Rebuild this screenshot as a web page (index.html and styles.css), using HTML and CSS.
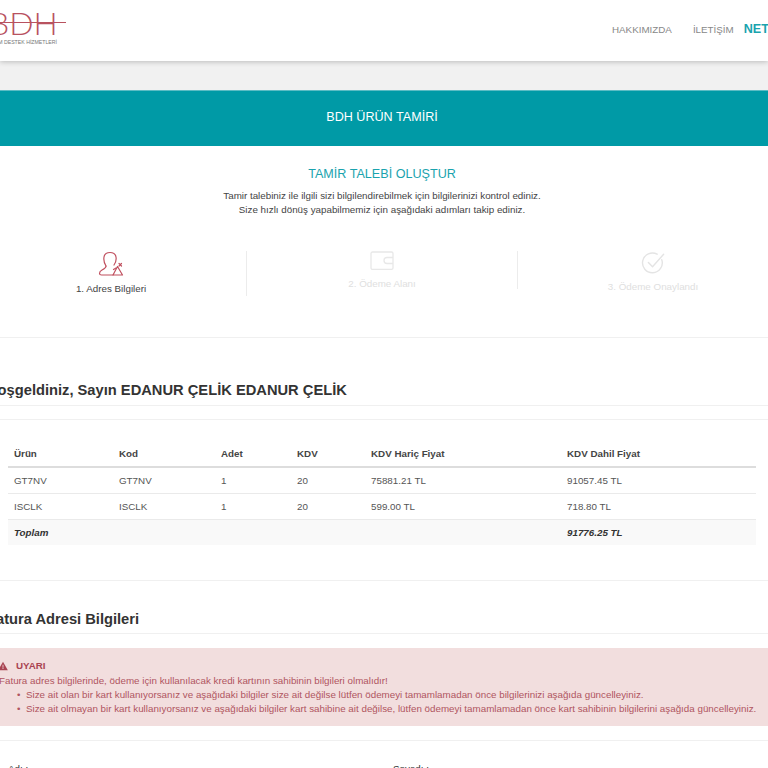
FILE: index.html
```html
<!DOCTYPE html>
<html lang="tr">
<head>
<meta charset="utf-8">
<title>BDH Ürün Tamiri</title>
<link rel="stylesheet" href="styles.css">
</head>
<body>
<div class="page">
  <header class="topbar">
    <div class="logo">
      <div class="logo-mark">BDH</div>
      <div class="logo-line"></div>
      <div class="logo-sub">BİLİŞİM DESTEK HİZMETLERİ</div>
    </div>
    <nav class="nav">
      <a class="nav-link">HAKKIMIZDA</a>
      <a class="nav-link">İLETİŞİM</a>
      <a class="nav-brand">NETWORK</a>
    </nav>
  </header>

  <div class="banner">BDH ÜRÜN TAMİRİ</div>

  <section class="intro">
    <h2 class="intro-title">TAMİR TALEBİ OLUŞTUR</h2>
    <p class="intro-text">Tamir talebiniz ile ilgili sizi bilgilendirebilmek için bilgilerinizi kontrol ediniz.<br>Size hızlı dönüş yapabilmemiz için aşağıdaki adımları takip ediniz.</p>
  </section>

  <section class="steps">
    <div class="step active">
      <svg class="step-icon" viewBox="0 0 26 26" fill="none" stroke="#c0505f" stroke-width="1.200" stroke-linejoin="round" stroke-linecap="round">
        <path d="M8 15C6 12 5.500 9 6 6 6.500 3 9 1.500 12 1.500S17.500 3 18 6C18.500 9 17.500 12 16 14"/>
        <path d="M8 15C8 17 6 18 4 19 2 20 1.500 21.500 1.500 22.500 1.500 23.500 2.500 24 3.500 24H15"/>
        <path d="M19.500 15.500L24.500 24H15z"/>
        <path d="M15.500 18.500L18 17M21 12.500L23.500 15M21 15L23.500 12.500"/>
      </svg>
      <div class="step-label">1. Adres Bilgileri</div>
    </div>
    <div class="step muted second">
      <svg class="step-icon" viewBox="1 4 24 20" fill="none" stroke="#e8e8e8" stroke-width="1.300" stroke-linejoin="round">
        <path d="M2 6.500c0-1 .7-1.500 1.500-1.500h19c.8 0 1.500.5 1.500 1.500V21c0 .8-.7 1.300-1.500 1.300h-19C2.700 22.300 2 21.800 2 21z"/>
        <path d="M24 10.500h-6a3 3 0 0 0 0 6h6"/>
      </svg>
      <div class="step-label">2. Ödeme Alanı</div>
    </div>
    <div class="step muted third">
      <svg class="step-icon" viewBox="0 0 26 26" fill="none" stroke="#e4e4e4" stroke-width="1.500" stroke-linecap="round" stroke-linejoin="round">
        <path d="M22.500 9.500A10.700 10.700 0 1 1 17.500 3.500"/>
        <path d="M8 12.500l4.500 4.500L24.500 3.500"/>
      </svg>
      <div class="step-label">3. Ödeme Onaylandı</div>
    </div>
  </section>

  <hr class="rule rule-steps">

  <h3 class="section-title welcome">Hoşgeldiniz, Sayın EDANUR ÇELİK EDANUR ÇELİK</h3>
  <hr class="rule">
  <hr class="rule rule-table">

  <table class="cart">
    <thead>
      <tr><th class="c1">Ürün</th><th class="c2">Kod</th><th class="c3">Adet</th><th class="c4">KDV</th><th class="c5">KDV Hariç Fiyat</th><th>KDV Dahil Fiyat</th></tr>
    </thead>
    <tbody>
      <tr><td>GT7NV</td><td>GT7NV</td><td>1</td><td>20</td><td>75881.21 TL</td><td>91057.45 TL</td></tr>
      <tr><td>ISCLK</td><td>ISCLK</td><td>1</td><td>20</td><td>599.00 TL</td><td>718.80 TL</td></tr>
      <tr class="total"><td>Toplam</td><td></td><td></td><td></td><td></td><td>91776.25 TL</td></tr>
    </tbody>
  </table>

  <hr class="rule rule-after-table">

  <h3 class="section-title billing">Fatura Adresi Bilgileri</h3>
  <hr class="rule">

  <div class="alert">
    <div class="alert-head">
      <svg class="alert-icon" viewBox="0 0 12 11"><path d="M6 .5L11.800 10.500H.2z" fill="#a94452"/><path d="M5.500 4h1v3.500h-1zM5.500 8h1v1h-1z" fill="#f2dede"/></svg>
      <span>UYARI</span>
    </div>
    <div class="alert-text">Fatura adres bilgilerinde, ödeme için kullanılacak kredi kartının sahibinin bilgileri olmalıdır!</div>
    <ul class="alert-list">
      <li>Size ait olan bir kart kullanıyorsanız ve aşağıdaki bilgiler size ait değilse lütfen ödemeyi tamamlamadan önce bilgilerinizi aşağıda güncelleyiniz.</li>
      <li>Size ait olmayan bir kart kullanıyorsanız ve aşağıdaki bilgiler kart sahibine ait değilse, lütfen ödemeyi tamamlamadan önce kart sahibinin bilgilerini aşağıda güncelleyiniz.</li>
    </ul>
  </div>

  <hr class="rule rule-form">

  <div class="form-row">
    <label class="field-label">Adı :</label>
    <label class="field-label">Soyadı :</label>
  </div>
</div>
</body>
</html>
```

FILE: styles.css
```css
html, body {
  margin: 0;
  padding: 0;
  background: #fff;
  overflow: hidden;
}
body {
  font-family: "Liberation Sans", Arial, sans-serif;
  color: #333;
}
.page {
  width: 768px;
  height: 768px;
  overflow: hidden;
  background: linear-gradient(#f1f1f1, #f1f1f1) 0 61px / 100% 30px no-repeat #fff;
}

/* Header */
.topbar {
  height: 61px;
  background: #fff;
  box-shadow: 0 1px 5px rgba(0, 0, 0, .22);
  display: flex;
  justify-content: space-between;
  margin-bottom: 29px;
}
.logo {
  position: relative;
  width: 70px;
  height: 61px;
  overflow: hidden;
}
.logo-mark {
  position: absolute;
  left: -11px;
  top: 4px;
  font-family: "Lato", "Liberation Sans", sans-serif;
  font-weight: 300;
  font-size: 32px;
  line-height: 38px;
  color: #b8525f;
  white-space: nowrap;
}
.logo-line {
  position: absolute;
  left: 0;
  top: 22px;
  width: 66px;
  height: 1px;
  background: #b8525f;
}
.logo-sub {
  position: absolute;
  right: 13px;
  top: 38px;
  font-size: 5.200px;
  line-height: 8px;
  color: #777;
  white-space: nowrap;
}
.nav {
  display: flex;
  align-items: center;
  white-space: nowrap;
  flex: none;
  width: 156px;
  padding-bottom: 3px;
  box-sizing: border-box;
  overflow: hidden;
}
.nav-link {
  font-size: 9.800px;
  color: #888;
  margin-right: 21px;
}
.nav-link + .nav-link {
  margin-right: 10px;
}
.nav-brand {
  font-size: 12.600px;
  font-weight: bold;
  color: #1aa3ae;
}

/* Banner */
.banner {
  height: 56px;
  margin-left: -24px;
  width: 812px;
  background: #009aa6;
  border-top: 1px solid #5cbcc4;
  box-sizing: border-box;
  color: #fff;
  font-size: 12.600px;
  line-height: 53px;
  text-align: center;
}

/* Intro */
.intro {
  margin: 0 0 0 -24px;
  width: 812px;
  text-align: center;
}
.intro-title {
  margin: 20px 0 0;
  font-size: 12.600px;
  line-height: 16px;
  font-weight: normal;
  color: #1aa3ae;
}
.intro-text {
  margin: 7px 0 0;
  font-size: 9.800px;
  line-height: 14px;
  color: #444;
}

/* Steps */
.steps {
  display: grid;
  grid-template-columns: 271px 271px 270px;
  align-items: start;
  margin: 34px 0 0 -24px;
  width: 812px;
  height: 45px;
}
.step {
  display: flex;
  flex-direction: column;
  align-items: center;
  border-right: 1px solid #ececec;
  height: 45px;
}
.step:last-child {
  border-right: 0;
}
.step-icon {
  width: 26px;
  height: 26px;
  flex: none;
}
.step-label {
  margin-top: 5px;
  font-size: 9.800px;
  line-height: 14px;
  color: #444;
}
.step.muted .step-label {
  color: #e0e0e0;
}
.step.second {
  height: 38px;
}
.second .step-icon {
  width: 24px;
  height: 20px;
}
.second .step-label {
  margin-top: 6px;
}
.third .step-icon {
  width: 24px;
  height: 24px;
}

/* Rules */
.rule {
  border: 0;
  border-top: 1px solid #f0f0f0;
  margin: 0;
}
.rule-steps {
  margin-top: 41px;
}
.rule-table {
  margin-top: 13px;
}
.rule-after-table {
  margin-top: 35px;
}
.rule-form {
  margin-top: 14px;
}

/* Section titles */
.section-title {
  font-size: 14.700px;
  line-height: 18px;
  font-weight: bold;
  color: #333;
  white-space: nowrap;
}
.welcome {
  margin: 43px 0 6px -13px;
}
.billing {
  margin: 29px 0 5px -13px;
}

/* Table */
.cart {
  margin: 20px 0 0 8px;
  width: 748px;
  border-collapse: collapse;
  table-layout: fixed;
  font-size: 9.800px;
  color: #555;
}
.cart th {
  text-align: left;
  color: #444;
  font-weight: bold;
  height: 27px;
  padding: 0 0 0 6px;
  border-bottom: 2px solid #ddd;
  box-sizing: border-box;
}
.cart td {
  height: 26px;
  padding: 0 0 0 6px;
  border-bottom: 1px solid #eaeaea;
  box-sizing: border-box;
}
.c1 { width: 105px; }
.c2 { width: 102px; }
.c3 { width: 76px; }
.c4 { width: 74px; }
.c5 { width: 196px; }
.total td {
  background: #f9f9f9;
  font-style: italic;
  font-weight: bold;
  color: #333;
  border-bottom: 0;
}

/* Alert */
.alert {
  margin: 14px 0 0;
  height: 78px;
  box-sizing: border-box;
  background: #f2dede;
  color: #b0555f;
  font-size: 9.800px;
  line-height: 14px;
  padding-top: 11px;
  white-space: nowrap;
}
.alert-head {
  display: flex;
  align-items: center;
  gap: 8px;
  margin-left: -2px;
  margin-bottom: 1px;
  font-weight: bold;
  color: #a94452;
}
.alert-icon {
  width: 10px;
  height: 10px;
}
.alert-text {
  margin-left: -1px;
}
.alert-list {
  margin: 0;
  padding: 0 0 0 26px;
  list-style: none;
}
.alert-list li {
  position: relative;
}
.alert-list li::before {
  content: "•";
  position: absolute;
  left: -9px;
}

/* Form */
.form-row {
  display: grid;
  grid-template-columns: 385px 1fr;
  padding: 21px 0 0 8px;
}
.field-label {
  font-size: 9.800px;
  line-height: 14px;
  color: #333;
}
```
